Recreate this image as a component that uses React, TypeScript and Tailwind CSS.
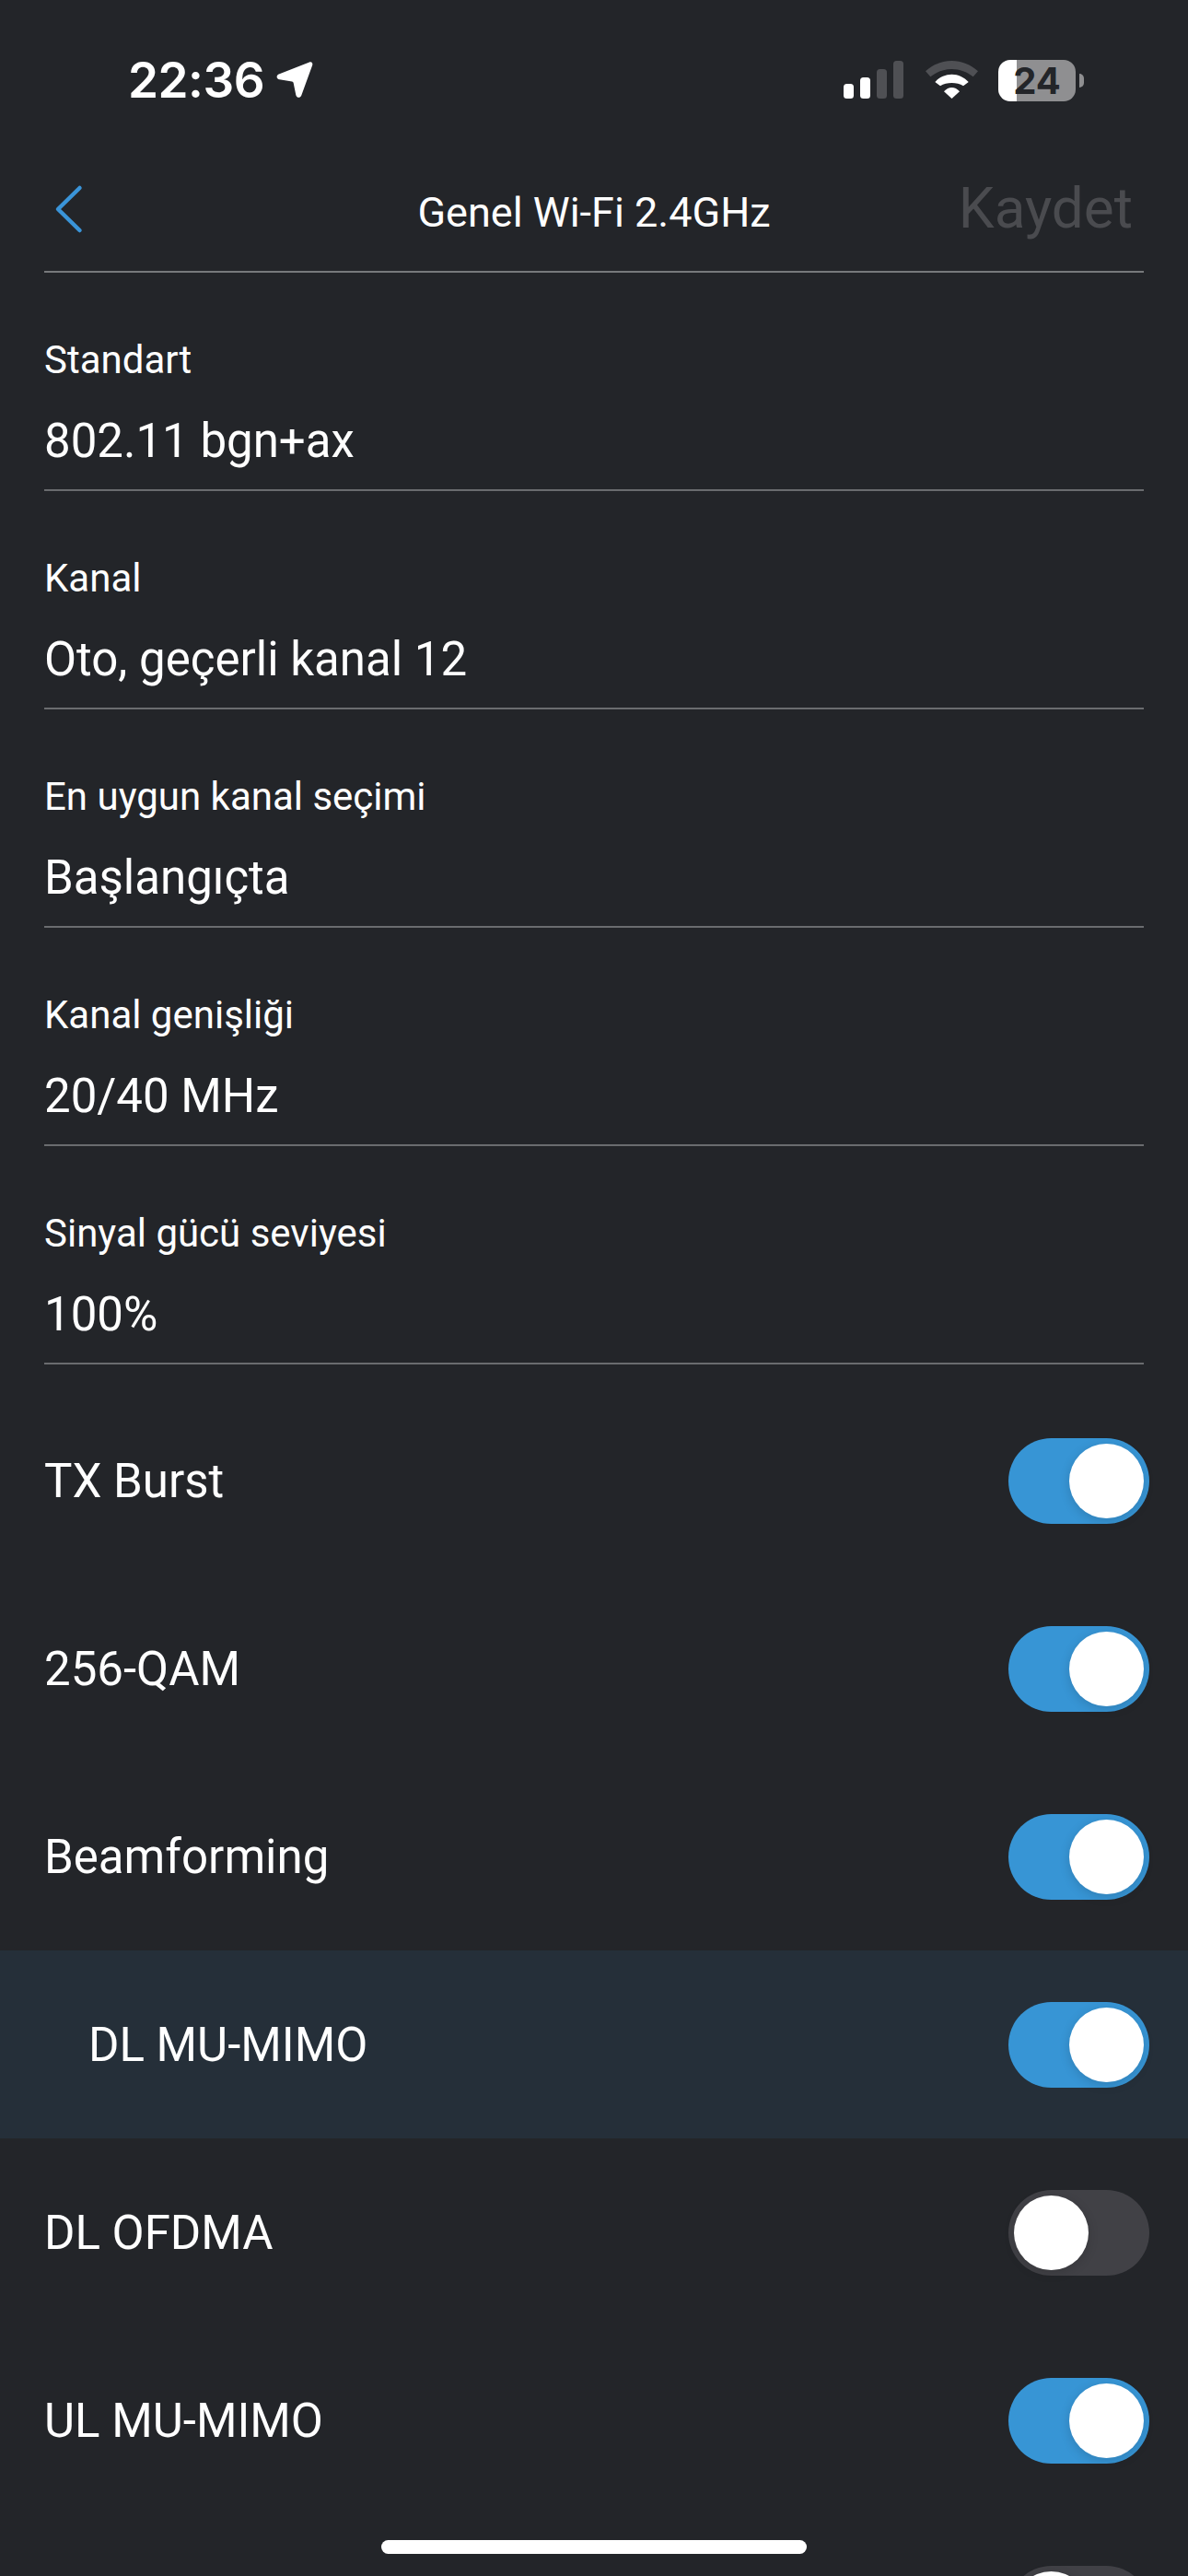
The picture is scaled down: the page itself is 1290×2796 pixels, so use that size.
import React from "react";

const fields = [
  ["Standart", "802.11 bgn+ax"],
  ["Kanal", "Oto, geçerli kanal 12"],
  ["En uygun kanal seçimi", "Başlangıçta"],
  ["Kanal genişliği", "20/40 MHz"],
  ["Sinyal gücü seviyesi", "100%"],
];

const toggles: { label: string; on: boolean; sub?: boolean }[] = [
  { label: "TX Burst", on: true },
  { label: "256-QAM", on: true },
  { label: "Beamforming", on: true },
  { label: "DL MU-MIMO", on: true, sub: true },
  { label: "DL OFDMA", on: false },
  { label: "UL MU-MIMO", on: true },
  { label: "", on: false },
];

function Toggle({ on }: { on: boolean }) {
  return (
    <div
      className={
        on
          ? "flex h-[93px] w-[153px] shrink-0 items-center justify-end rounded-full bg-[#3795d5] p-[6px]"
          : "flex h-[93px] w-[153px] shrink-0 items-center justify-start rounded-full bg-[#414146] p-[6px]"
      }
    >
      <div className="h-[81px] w-[81px] rounded-full bg-white shadow-[0_3px_12px_rgba(0,0,0,0.15)]" />
    </div>
  );
}

export default function App() {
  return (
    <div className="relative h-[2796px] w-[1290px] overflow-hidden bg-[#232529] font-['Roboto',sans-serif] text-white">
      {/* Status bar */}
      <div className="flex h-[174px] items-center justify-between pl-[139px] pr-[113px]">
        <div className="flex items-center gap-[12px]">
          <span className="font-['Inter',sans-serif] text-[53px] font-semibold leading-none tracking-[-0.5px]">22:36</span>
          <svg width="42" height="42" viewBox="0 0 42 42" fill="#fff">
            <path d="M37 1.500c2.200-.8 4 1 3.200 3.300L28.300 37.500c-1.300 3.300-5.300 3-6-.5l-2.700-13.300c-.2-.8-.7-1.200-1.500-1.300L4.500 20.300C1 19.800.6 15.800 3.800 14.500Z" />
          </svg>
        </div>
        <div className="flex items-center">
          <svg width="66" height="42" viewBox="0 0 66 42" className="mr-[22px]">
            <rect x="0" y="25" width="11" height="16" rx="3.500" fill="#fff" />
            <rect x="18" y="18" width="11" height="23" rx="3.500" fill="#fff" />
            <rect x="36" y="9" width="11" height="32" rx="3.500" fill="#4f5054" />
            <rect x="54" y="0" width="11" height="41" rx="3.500" fill="#4f5054" />
          </svg>
          <svg width="60" height="44" viewBox="0 0 60 44" className="mr-[20px]">
            <path d="M1 12.300C9 5 19 1 29.500 1S50 5 58 12.300l-5.300 6C46 13 38 10 29.500 10S13 13 6.300 18.300Z" fill="#4f5054" />
            <path d="M11.300 24C16 18.800 22.500 15.700 29.500 15.700S43 18.800 47.700 24L42 28.300C38.500 26 34 25 29.500 25S20.500 26 17 28.300Z" fill="#fff" />
            <path d="M21 34.300C23.500 31.500 26.500 30 29.500 30S35.500 31.500 38 34.300L29.500 42Z" fill="#fff" />
          </svg>
          <div className="flex h-[45px] w-[84px] items-center justify-center rounded-[13px] bg-[linear-gradient(to_right,#ffffff_20px,#8f8f91_20px)] font-['Inter',sans-serif] text-[40px] font-bold leading-[45px] text-[#232529]">
            24
          </div>
          <div className="ml-[4px] h-[15px] w-[5px] rounded-r-full bg-[#8f8f91]" />
        </div>
      </div>

      {/* Nav */}
      <div className="grid h-[120px] grid-cols-[1fr_auto_1fr] items-start pl-[58px] pr-[60px] pt-[26px]">
        <svg width="32" height="54" viewBox="0 0 32 54" fill="none">
          <path d="M28.500 4 5 27l23.500 23" stroke="#3a94d8" strokeWidth="4.500" strokeLinecap="round" strokeLinejoin="round" />
        </svg>
        <div className="pl-[2px] pt-[2px] text-[45px] leading-[58px]">Genel Wi-Fi 2.4GHz</div>
        <div className="justify-self-end text-[62px] leading-[52px] text-[#4a4b4f]">Kaydet</div>
      </div>
      <div className="mx-[48px] h-[2px] bg-[#77797b]" />

      {/* Fields */}
      <div className="flex flex-col px-[48px]">
        {fields.map(([label, value]) => (
          <div key={label} className="flex h-[237px] flex-col border-b-2 border-[#6a6c6f] pt-[70px]">
            <div className="text-[42px] leading-[50px]">{label}</div>
            <div className="mt-[34px] text-[51px] leading-[58px]">{value}</div>
          </div>
        ))}
      </div>

      {/* Toggles */}
      <div className="mt-[24px] flex flex-col">
        {toggles.map((t, i) => (
          <div
            key={i}
            className={
              t.sub
                ? "flex h-[204px] shrink-0 items-center justify-between bg-[#252f39] pl-[96px] pr-[42px]"
                : "flex h-[204px] shrink-0 items-center justify-between pl-[48px] pr-[42px]"
            }
          >
            <span className="text-[51px] leading-none">{t.label}</span>
            <Toggle on={t.on} />
          </div>
        ))}
      </div>

      {/* Home indicator */}
      <div className="absolute bottom-[24px] left-[414px] h-[15px] w-[462px] rounded-full bg-white" />
    </div>
  );
}
